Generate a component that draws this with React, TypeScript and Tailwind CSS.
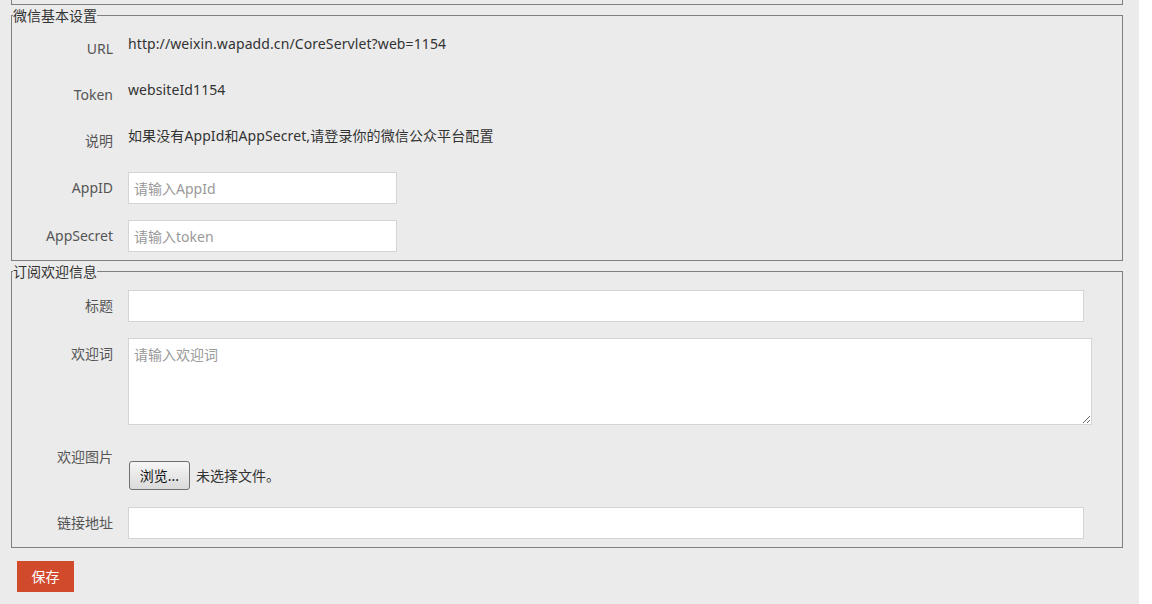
import { FC, ReactNode } from "react";

const font = { fontFamily: '"Noto Sans", "Noto Sans CJK SC", sans-serif' };

const Label: FC<{ children: ReactNode; className?: string }> = ({ children, className = "" }) => (
  <div className={`w-[101px] mr-[15px] shrink-0 text-right text-[14px] leading-[20px] text-[#555] ${className}`}>
    {children}
  </div>
);

const TextRow: FC<{ label: string; value: string }> = ({ label, value }) => (
  <div className="flex h-[46px] items-start">
    <Label className="pt-[5px]">{label}</Label>
    <div className="text-[14px] leading-[20px] tracking-[0.1px] text-[#333]">{value}</div>
  </div>
);

const inputCls =
  "h-[32px] border border-[#d4d4d4] bg-white px-[5px] text-[14px] text-[#333] placeholder:text-[#999] outline-none";

const InputRow: FC<{ label: string; placeholder?: string; width: string; className?: string }> = ({
  label,
  placeholder,
  width,
  className = "",
}) => (
  <div className={`flex items-center ${className}`}>
    <Label>{label}</Label>
    <input type="text" placeholder={placeholder} className={`${inputCls} ${width}`} />
  </div>
);

export default function App() {
  return (
    <div className="min-h-[604px] w-full bg-white" style={font}>
      <div className="min-h-[604px] w-[1139px] bg-[#ebebeb] pl-[11px] pr-[16px]">
        {/* tail of the fieldset above */}
        <div className="h-[5px] border-x border-b border-[#7f7f7f]" />

        <fieldset className="mt-[2px] border border-[#7f7f7f] pb-[8px]">
          <legend className="ml-px px-0 text-[14px] leading-[17px] text-[#333]">微信基本设置</legend>
          <div className="pt-[10px]">
            <TextRow label="URL" value="http://weixin.wapadd.cn/CoreServlet?web=1154" />
            <TextRow label="Token" value="websiteId1154" />
            <TextRow label="说明" value="如果没有AppId和AppSecret,请登录你的微信公众平台配置" />
            <InputRow label="AppID" placeholder="请输入AppId" width="w-[269px]" className="mb-[16px]" />
            <InputRow label="AppSecret" placeholder="请输入token" width="w-[269px]" />
          </div>
        </fieldset>

        <fieldset className="mt-[2px] border border-[#7f7f7f] pb-[8px]">
          <legend className="ml-px px-0 text-[14px] leading-[17px] text-[#333]">订阅欢迎信息</legend>
          <div className="pt-[10px]">
            <InputRow label="标题" width="w-[956px]" className="mb-[16px]" />
            <div className="mb-[16px] flex items-start">
              <Label className="pt-[6px]">欢迎词</Label>
              <textarea
                placeholder="请输入欢迎词"
                className="h-[87px] w-[964px] border border-[#d4d4d4] bg-white px-[5px] py-[6px] text-[14px] leading-[20px] text-[#333] placeholder:text-[#999] outline-none"
              />
            </div>
            <div className="mb-[17px] flex items-start">
              <Label className="pt-[6px]">欢迎图片</Label>
              <div className="flex items-center pt-[20px]">
                <button
                  type="button"
                  className="ml-px h-[29px] w-[61px] rounded-[3px] border border-[#707070] bg-linear-to-b from-[#f6f6f6] to-[#dadada] text-[14px] text-[#111]"
                >
                  浏览...
                </button>
                <span className="ml-[6px] text-[14px] text-[#333]">未选择文件。</span>
              </div>
            </div>
            <InputRow label="链接地址" width="w-[956px]" />
          </div>
        </fieldset>

        <button
          type="button"
          className="ml-[6px] mt-[13px] h-[31px] w-[57px] bg-[#d14a2c] text-[14px] text-white"
        >
          保存
        </button>
      </div>
    </div>
  );
}
